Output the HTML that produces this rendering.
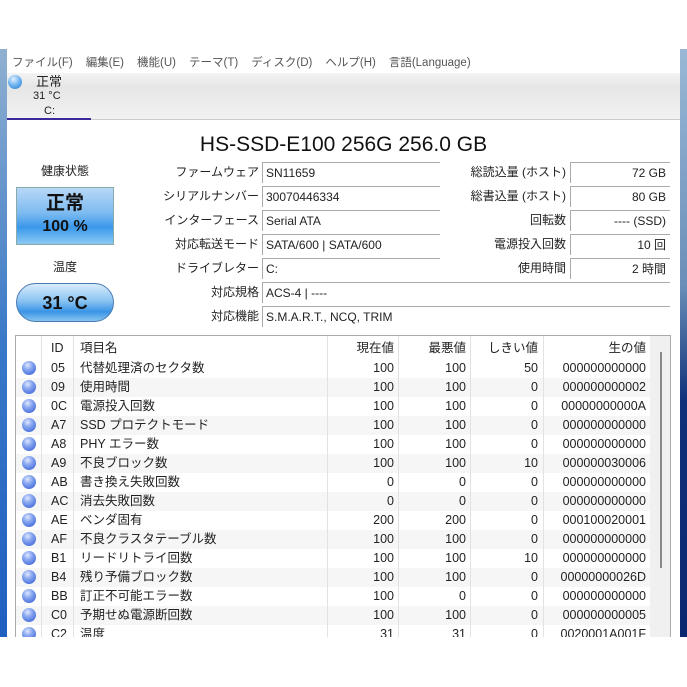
<!DOCTYPE html>
<html><head><meta charset="utf-8"><style>
*{margin:0;padding:0;box-sizing:border-box}
body{width:687px;height:687px;position:relative;background:#fff;overflow:hidden;font-family:"Liberation Sans","Noto Sans CJK JP",sans-serif;color:#222;line-height:1.2}
.a{position:absolute;white-space:nowrap}
.menu span{margin-right:13px}
.lbl{position:absolute;font-size:12px;line-height:15px;text-align:right;color:#222}
.fld{position:absolute;height:21px;border-top:1px solid #aaa;border-left:1px solid #aaa;font-size:12px;line-height:15px;padding:3px 3px 0;color:#222}
.r{text-align:right;padding-right:4px}
.row{position:absolute;left:16px;width:634px;height:19px;font-size:12.5px;line-height:15px}
.row div{position:absolute;top:2px;line-height:15px}
.dot{width:14px;height:14px;border-radius:50%;background:radial-gradient(circle at 40% 30%,#dfe8ff 0,#8aa8f0 35%,#3a62d8 90%);left:6px;top:2px!important}
.vl{position:absolute;top:336px;width:1px;height:301px;background:#e2e2e2;z-index:5}
</style></head><body>
<div class="a" style="left:0;top:49px;width:7px;height:588px;background:linear-gradient(#8fb0d0,#3a78c8 50%,#1f5fc0)"></div>
<div class="a" style="left:680px;top:49px;width:7px;height:588px;background:linear-gradient(#9ab8d6,#6a8fb8 40%,#10307a 60%,#0a2870)"></div>
<div class="a menu" style="left:12px;top:56px;font-size:11.5px;line-height:14px;color:#555"><span>ファイル(F)</span><span>編集(E)</span><span>機能(U)</span><span>テーマ(T)</span><span>ディスク(D)</span><span>ヘルプ(H)</span><span>言語(Language)</span></div>
<div class="a" style="left:7px;top:73px;width:673px;height:47px;background:linear-gradient(#f4f4f4,#e6e6e6 30%,#f2f2f2);border-bottom:1px solid #ccc"></div>
<div class="a" style="left:7px;top:118px;width:84px;height:2px;background:#3a2a9a"></div>
<div class="a" style="left:8px;top:75px;width:14px;height:14px;border-radius:50%;background:radial-gradient(circle at 40% 30%,#e0f0ff,#6ab0ee 50%,#2a7ad0)"></div>
<div class="a" style="left:36px;top:74px;font-size:13px;line-height:15px">正常</div>
<div class="a" style="left:33px;top:90px;font-size:11px;line-height:13px">31 °C</div>
<div class="a" style="left:44px;top:105px;font-size:11px;line-height:13px">C:</div>
<div class="a" style="left:0;width:687px;text-align:center;top:132px;font-size:21px;line-height:25px;color:#111">HS-SSD-E100 256G 256.0 GB</div>
<div class="a" style="left:16px;width:98px;text-align:center;top:164px;font-size:12px;line-height:15px">健康状態</div>
<div class="a" style="left:16px;top:187px;width:98px;height:58px;border:1px solid #8aa;background:linear-gradient(#b8d8f6,#7cbaf0 45%,#3a98ea 70%,#8ccaf4);text-align:center;font-weight:bold;color:#111">
<div style="font-size:19px;line-height:22px;margin-top:5px">正常</div><div style="font-size:16px;line-height:20px;margin-top:2px">100 %</div></div>
<div class="a" style="left:16px;width:98px;text-align:center;top:260px;font-size:12px;line-height:15px">温度</div>
<div class="a" style="left:16px;top:283px;width:98px;height:39px;border:1px solid #4a7ab0;border-radius:20px;background:linear-gradient(#d8ecfc,#8cc4f2 45%,#3a94e6 75%,#86c4f0);text-align:center;font-weight:bold;font-size:18px;line-height:22px;padding-top:8px;color:#111">31 °C</div>

<div class="lbl" style="right:428px;top:165px">ファームウェア</div><div class="fld" style="left:262px;top:162px;width:178px">SN11659</div>
<div class="lbl" style="right:428px;top:189px">シリアルナンバー</div><div class="fld" style="left:262px;top:186px;width:178px">30070446334</div>
<div class="lbl" style="right:428px;top:213px">インターフェース</div><div class="fld" style="left:262px;top:210px;width:178px">Serial ATA</div>
<div class="lbl" style="right:428px;top:237px">対応転送モード</div><div class="fld" style="left:262px;top:234px;width:178px">SATA/600 | SATA/600</div>
<div class="lbl" style="right:428px;top:261px">ドライブレター</div><div class="fld" style="left:262px;top:258px;width:178px">C:</div>
<div class="lbl" style="right:428px;top:285px">対応規格</div><div class="fld" style="left:262px;top:282px;width:408px">ACS-4 | ----</div>
<div class="lbl" style="right:428px;top:309px">対応機能</div><div class="fld" style="left:262px;top:306px;width:408px">S.M.A.R.T., NCQ, TRIM</div>

<div class="lbl" style="right:121px;top:165px">総読込量 (ホスト)</div><div class="fld r" style="left:570px;top:162px;width:100px">72 GB</div>
<div class="lbl" style="right:121px;top:189px">総書込量 (ホスト)</div><div class="fld r" style="left:570px;top:186px;width:100px">80 GB</div>
<div class="lbl" style="right:121px;top:213px">回転数</div><div class="fld r" style="left:570px;top:210px;width:100px">---- (SSD)</div>
<div class="lbl" style="right:121px;top:237px">電源投入回数</div><div class="fld r" style="left:570px;top:234px;width:100px">10 回</div>
<div class="lbl" style="right:121px;top:261px">使用時間</div><div class="fld r" style="left:570px;top:258px;width:100px">2 時間</div>

<div class="a" style="left:15px;top:335px;width:656px;height:302px;border:1px solid #aaa;border-bottom:none"></div>
<div class="a" style="left:650px;top:336px;width:20px;height:301px;background:#f0f0f0"></div>
<div class="a" style="left:660px;top:352px;width:2px;height:216px;background:#888"></div>
<div class="vl" style="left:41px"></div>
<div class="vl" style="left:73px"></div>
<div class="vl" style="left:327px"></div>
<div class="vl" style="left:398px"></div>
<div class="vl" style="left:470px"></div>
<div class="vl" style="left:543px"></div>
<div class="row" style="top:339px"><div style="left:35px">ID</div><div style="left:64px">項目名</div><div style="right:256px">現在値</div><div style="right:184px">最悪値</div><div style="right:112px">しきい値</div><div style="right:4px">生の値</div></div>
<div id="rows"></div>
<script>
var d=[["05","代替処理済のセクタ数",100,100,50,"000000000000"],["09","使用時間",100,100,0,"000000000002"],["0C","電源投入回数",100,100,0,"00000000000A"],["A7","SSD プロテクトモード",100,100,0,"000000000000"],["A8","PHY エラー数",100,100,0,"000000000000"],["A9","不良ブロック数",100,100,10,"000000030006"],["AB","書き換え失敗回数",0,0,0,"000000000000"],["AC","消去失敗回数",0,0,0,"000000000000"],["AE","ベンダ固有",200,200,0,"000100020001"],["AF","不良クラスタテーブル数",100,100,0,"000000000000"],["B1","リードリトライ回数",100,100,10,"000000000000"],["B4","残り予備ブロック数",100,100,0,"00000000026D"],["BB","訂正不可能エラー数",100,0,0,"000000000000"],["C0","予期せぬ電源断回数",100,100,0,"000000000005"],["C2","温度",31,31,0,"0020001A001F"]];
var h="";d.forEach(function(r,i){var t=359+i*19;h+='<div class="row" style="top:'+t+'px;'+(i%2?'background:#f6f6f6;':'')+'height:'+(i==14?637-t:19)+'px;overflow:hidden"><div class="dot"></div><div style="left:35px">'+r[0]+'</div><div style="left:64px">'+r[1]+'</div><div style="right:256px">'+r[2]+'</div><div style="right:184px">'+r[3]+'</div><div style="right:112px">'+r[4]+'</div><div style="right:4px">'+r[5]+'</div></div>';});
document.getElementById("rows").outerHTML=h;
</script>
</body></html>
